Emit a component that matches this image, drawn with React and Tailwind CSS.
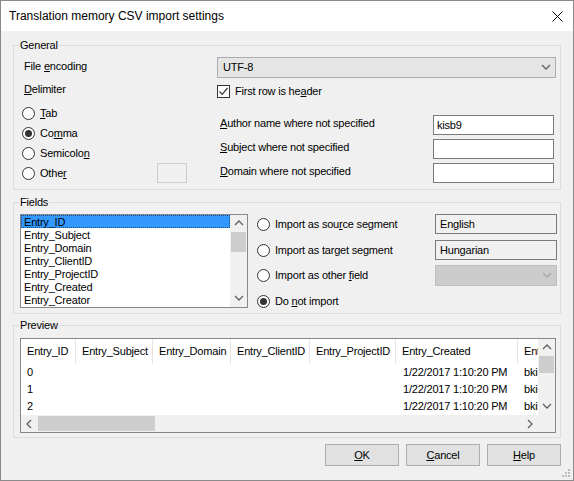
import React from "react"

const fields = [
    "Entry_ID",
    "Entry_Subject",
    "Entry_Domain",
    "Entry_ClientID",
    "Entry_ProjectID",
    "Entry_Created",
    "Entry_Creator",
]

const columns = [
    { name: "Entry_ID", w: "w-[55px]" },
    { name: "Entry_Subject", w: "w-[77px]" },
    { name: "Entry_Domain", w: "w-[78px]" },
    { name: "Entry_ClientID", w: "w-[79px]" },
    { name: "Entry_ProjectID", w: "w-[86px]" },
    { name: "Entry_Created", w: "w-[122px]" },
    { name: "Entry_Creator", w: "w-[60px]" },
]

const rows = ["0", "1", "2"]

function Chevron({ dir = "down", color = "#606060" }) {
    const paths = {
        down: "M1 2 L5 6 L9 2",
        up: "M1 6 L5 2 L9 6",
        left: "M6 1 L2 5 L6 9",
        right: "M3 1 L7 5 L3 9",
    }
    return (
        <svg width="10" height="10" viewBox="0 0 10 10">
            <path d={paths[dir]} fill="none" stroke={color} strokeWidth="1.3" />
        </svg>
    )
}

function Radio({ checked }) {
    return (
        <span className="flex h-[13px] w-[13px] shrink-0 items-center justify-center rounded-full border border-[#333] bg-white">
            {checked && <span className="h-[7px] w-[7px] rounded-full bg-[#333]" />}
        </span>
    )
}

function RadioRow({ checked, children }) {
    return (
        <div className="flex h-[20px] items-center gap-[5px]">
            <Radio checked={checked} />
            <span>{children}</span>
        </div>
    )
}

function Group({ title, className, children }) {
    return (
        <fieldset className={"min-w-0 border border-[#dcdcdc] p-0 " + className}>
            <legend className="ml-[5px] px-[1px] leading-[15px]">{title}</legend>
            {children}
        </fieldset>
    )
}

function VScroll({ thumbH }) {
    return (
        <div className="flex w-[17px] shrink-0 flex-col bg-[#f0f0f0]">
            <div className="flex h-[17px] items-center justify-center">
                <Chevron dir="up" />
            </div>
            <div className="flex-1">
                <div className={"mx-[1px] bg-[#cdcdcd] " + thumbH} />
            </div>
            <div className="flex h-[17px] items-center justify-center">
                <Chevron dir="down" />
            </div>
        </div>
    )
}

function Button({ children }) {
    return (
        <button className="flex h-[22px] w-[74px] items-center justify-center border border-[#adadad] bg-[#e1e1e1]">
            {children}
        </button>
    )
}

export default function App() {
    return (
        <div className="flex h-[481px] w-[574px] flex-col border border-[#8a8a8a] bg-[#f0f0f0] font-['Liberation_Sans',Arial,sans-serif] text-[11px] tracking-[-0.2px] text-black">
            {/* title bar */}
            <div className="flex h-[30px] shrink-0 items-center justify-between bg-white pl-[8px] pr-[10px] text-[12px] tracking-normal">
                <span>Translation memory CSV import settings</span>
                <svg width="11" height="11" viewBox="0 0 11 11">
                    <path d="M0.5 0.5 L10.5 10.5 M10.5 0.5 L0.5 10.5" stroke="#000" strokeWidth="1" />
                </svg>
            </div>

            <div className="flex flex-col px-[12px]">
                <Group title="General" className="mt-[7px]">
                    <div className="flex pb-[6px] pl-[8px] pr-[4px] pt-[4px]">
                        <div className="flex w-[195px] flex-col">
                            <div className="flex h-[21px] items-center pb-[3px] pl-[2px]">
                                File <u className="ml-[3px]">e</u>ncoding
                            </div>
                            <div className="flex h-[22px] items-center pl-[2px]">
                                <span>
                                    <u>D</u>elimiter
                                </span>
                            </div>
                            <div className="mt-[3px]">
                                <RadioRow>
                                    <u>T</u>ab
                                </RadioRow>
                                <RadioRow checked>
                                    Co<u>m</u>ma
                                </RadioRow>
                                <RadioRow>
                                    Semicolo<u>n</u>
                                </RadioRow>
                                <div className="flex h-[20px] items-center">
                                    <Radio />
                                    <span className="ml-[5px]">
                                        Othe<u>r</u>
                                    </span>
                                    <div className="ml-auto mr-[30px] h-[20px] w-[30px] border border-[#cccccc] bg-[#f0f0f0]" />
                                </div>
                            </div>
                        </div>
                        <div className="flex flex-1 flex-col">
                            <div className="flex h-[21px] items-center justify-between border border-[#adadad] bg-[#e5e5e5] pl-[5px] pr-[4px]">
                                <span>UTF-8</span>
                                <Chevron />
                            </div>
                            <div className="mt-[2px] flex h-[22px] items-center gap-[5px]">
                                <span className="flex h-[13px] w-[13px] items-center justify-center border border-[#333] bg-white">
                                    <svg width="11" height="11" viewBox="0 0 11 11">
                                        <path d="M1.5 5.5 L4.2 8.3 L9.5 2" fill="none" stroke="#333" strokeWidth="1.2" />
                                    </svg>
                                </span>
                                <span>
                                    First row is he<u>a</u>der
                                </span>
                            </div>
                            {[
                                ["A", "uthor name where not specified", "kisb9", "mt-[13px]"],
                                ["S", "ubject where not specified", "", "mt-[4px]"],
                                ["D", "omain where not specified", "", "mt-[4px]"],
                            ].map(([k, rest, val, mt]) => (
                                <div key={k} className={"flex h-[20px] items-center " + mt}>
                                    <span className="w-[216px] pb-[4px] pl-[3px]">
                                        <u>{k}</u>
                                        {rest}
                                    </span>
                                    <div className="flex h-[20px] w-[121px] items-center border border-[#7a7a7a] bg-white pl-[3px]">
                                        {val}
                                    </div>
                                </div>
                            ))}
                        </div>
                    </div>
                </Group>

                <Group title="Fields" className="mt-[5px]">
                    <div className="flex pb-[5px] pl-[6px] pt-[4px]">
                        <div className="flex h-[94px] w-[228px] border border-[#828790] bg-white">
                            <div className="flex-1">
                                {fields.map((f, i) => (
                                    <div
                                        key={f}
                                        className={
                                            "flex h-[13px] items-center pl-[3px] pt-[2px] " +
                                            (i === 0 ? "bg-[#3399ff] outline-1 outline-dotted outline-[#1a4d80] -outline-offset-1" : "")
                                        }
                                    >
                                        {f}
                                    </div>
                                ))}
                            </div>
                            <VScroll thumbH="h-[20px]" />
                        </div>
                        <div className="ml-[9px] flex flex-col">
                            <div className="flex h-[20px] items-center">
                                <div className="flex w-[178px] items-center gap-[5px]">
                                    <Radio />
                                    <span>
                                        Import as sou<u>r</u>ce segment
                                    </span>
                                </div>
                                <div className="flex h-[20px] w-[122px] items-center border border-[#7a7a7a] bg-[#f0f0f0] pl-[4px]">
                                    English
                                </div>
                            </div>
                            <div className="mt-[6px] flex h-[20px] items-center">
                                <div className="flex w-[178px] items-center gap-[5px]">
                                    <Radio />
                                    <span>
                                        Import as tar<u>g</u>et segment
                                    </span>
                                </div>
                                <div className="flex h-[20px] w-[122px] items-center border border-[#7a7a7a] bg-[#f0f0f0] pl-[4px]">
                                    Hungarian
                                </div>
                            </div>
                            <div className="mt-[5px] flex h-[21px] items-center">
                                <div className="flex w-[178px] items-center gap-[5px]">
                                    <Radio />
                                    <span>
                                        Import as other <u>f</u>ield
                                    </span>
                                </div>
                                <div className="flex h-[21px] w-[122px] items-center justify-end border border-[#bfbfbf] bg-[#cccccc] pr-[4px]">
                                    <Chevron color="#a6a6a6" />
                                </div>
                            </div>
                            <div className="mt-[8px] flex h-[14px] items-center gap-[5px]">
                                <Radio checked />
                                <span>
                                    Do <u>n</u>ot import
                                </span>
                            </div>
                        </div>
                    </div>
                </Group>

                <Group title="Preview" className="mt-[4px]">
                    <div className="pb-[4px] pl-[6px] pr-[4px] pt-[5px]">
                        <div className="flex h-[95px] flex-col border border-[#828790] bg-white">
                            <div className="flex min-h-0 flex-1">
                                <div className="flex-1 overflow-hidden">
                                    <div className="flex h-[25px]">
                                        {columns.map((c) => (
                                            <div
                                                key={c.name}
                                                className={"flex shrink-0 items-center whitespace-nowrap border-r border-[#e5e5e5] pl-[6px] " + c.w}
                                            >
                                                {c.name}
                                            </div>
                                        ))}
                                    </div>
                                    {rows.map((r) => (
                                        <div key={r} className="flex h-[17px] items-center">
                                            <div className="w-[55px] shrink-0 pl-[6px]">{r}</div>
                                            <div className="w-[320px] shrink-0" />
                                            <div className="w-[122px] shrink-0 whitespace-nowrap pl-[7px]">1/22/2017 1:10:20 PM</div>
                                            <div className="w-[60px] shrink-0 pl-[6px]">bkisb9</div>
                                        </div>
                                    ))}
                                </div>
                                <VScroll thumbH="h-[17px]" />
                            </div>
                            <div className="flex h-[17px] shrink-0 bg-[#f0f0f0]">
                                <div className="flex flex-1 items-center">
                                    <div className="flex h-[17px] w-[17px] items-center justify-center">
                                        <Chevron dir="left" />
                                    </div>
                                    <div className="h-[15px] w-[117px] bg-[#cdcdcd]" />
                                    <div className="ml-auto flex h-[17px] w-[17px] items-center justify-center">
                                        <Chevron dir="right" />
                                    </div>
                                </div>
                                <div className="w-[17px]" />
                            </div>
                        </div>
                    </div>
                </Group>

                <div className="mt-[6px] flex justify-end gap-[7px]">
                    <Button>
                        <u>O</u>K
                    </Button>
                    <Button>
                        <u>C</u>ancel
                    </Button>
                    <Button>
                        <u>H</u>elp
                    </Button>
                </div>
            </div>

            <div className="mt-auto flex justify-end pb-[2px] pr-[2px]">
                <svg width="10" height="10" viewBox="0 0 10 10">
                    {[
                        [8, 2],
                        [8, 5],
                        [5, 5],
                        [8, 8],
                        [5, 8],
                        [2, 8],
                    ].map(([x, y]) => (
                        <rect key={x + "-" + y} x={x - 1} y={y - 1} width="2" height="2" fill="#bcbcbc" />
                    ))}
                </svg>
            </div>
        </div>
    )
}
